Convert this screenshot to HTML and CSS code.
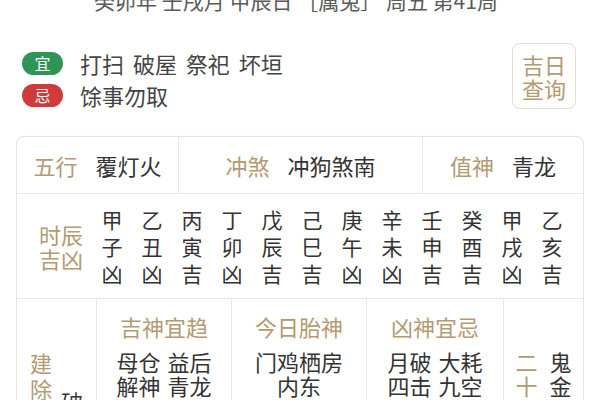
FILE: index.html
```html
<!DOCTYPE html>
<html lang="zh-CN">
<head>
<meta charset="utf-8">
<link rel="stylesheet" href="styles.css">
</head>
<body>
<div class="date">癸卯年 壬戌月 甲辰日 ［属兔］ 周五 第41周</div>

<div class="yiji">
  <div class="yiji-list">
    <div class="yiji-row"><span class="badge badge-yi">宜</span><span class="yiji-text">打扫 破屋 祭祀 坏垣</span></div>
    <div class="yiji-row"><span class="badge badge-ji">忌</span><span class="yiji-text">馀事勿取</span></div>
  </div>
  <div class="jiri-btn">吉日<br>查询</div>
</div>

<div class="table">
  <div class="row1">
    <div class="cell1"><span class="label">五行</span><span class="value">覆灯火</span></div>
    <div class="cell1 bl"><span class="label">冲煞</span><span class="value">冲狗煞南</span></div>
    <div class="cell1 bl"><span class="label">值神</span><span class="value">青龙</span></div>
  </div>
  <div class="row2">
    <div class="hour-label">时辰<br>吉凶</div>
    <div class="hours">
      <div class="hour">甲<br>子<br>凶</div>
      <div class="hour">乙<br>丑<br>凶</div>
      <div class="hour">丙<br>寅<br>吉</div>
      <div class="hour">丁<br>卯<br>凶</div>
      <div class="hour">戊<br>辰<br>吉</div>
      <div class="hour">己<br>巳<br>吉</div>
      <div class="hour">庚<br>午<br>凶</div>
      <div class="hour">辛<br>未<br>凶</div>
      <div class="hour">壬<br>申<br>吉</div>
      <div class="hour">癸<br>酉<br>吉</div>
      <div class="hour">甲<br>戌<br>凶</div>
      <div class="hour">乙<br>亥<br>吉</div>
    </div>
  </div>
  <div class="row3">
    <div class="vcell vcell-center">
      <div class="vlabel">建<br>除<br>十<br>二<br>神</div>
      <div class="vvalue">破<br>日</div>
    </div>
    <div class="col bl">
      <div class="col-head">吉神宜趋</div>
      <div class="col-body">母仓 益后<br>解神 青龙</div>
    </div>
    <div class="col bl">
      <div class="col-head">今日胎神</div>
      <div class="col-body">门鸡栖房<br>内东</div>
    </div>
    <div class="col bl">
      <div class="col-head">凶神宜忌</div>
      <div class="col-body">月破 大耗<br>四击 九空</div>
    </div>
    <div class="vcell vcell-top bl">
      <div class="vlabel">二<br>十<br>八<br>宿</div>
      <div class="vvalue">鬼<br>金<br>羊</div>
    </div>
  </div>
</div>
</body>
</html>
```

FILE: styles.css
```css
html, body {
  margin: 0;
  padding: 0;
  background: #ffffff;
}
body {
  width: 600px;
  height: 400px;
  overflow: hidden;
  font-family: "Noto Sans CJK SC", "Noto Sans", sans-serif;
  color: #333333;
}
.date {
  margin-top: -11px;
  height: 22px;
  line-height: 22px;
  font-size: 21px;
  color: #5a5a5a;
  text-align: center;
  padding-right: 8px;
  white-space: nowrap;
}
.yiji {
  display: flex;
  justify-content: space-between;
  align-items: flex-start;
  margin-top: 32px;
  padding: 0 24px 0 22px;
}
.yiji-list {
  margin-top: 4px;
  display: flex;
  flex-direction: column;
}
.yiji-row {
  height: 32px;
  display: flex;
  align-items: center;
  gap: 17px;
}
.badge {
  width: 41px;
  height: 23px;
  border-radius: 12px;
  color: #ffffff;
  font-size: 16px;
  line-height: 23px;
  text-align: center;
}
.badge-yi { background: #2f9455; }
.badge-ji { background: #cf3a3a; }
.yiji-text {
  font-size: 22px;
  line-height: 32px;
  color: #444444;
  word-spacing: 4px;
}
.jiri-btn {
  width: 62px;
  height: 64px;
  border: 1.5px solid #e3dccf;
  border-radius: 8px;
  color: #b59970;
  font-size: 22px;
  line-height: 24px;
  display: flex;
  align-items: center;
  justify-content: center;
  text-align: center;
}
.table {
  margin: 25px 16px 0 16px;
  border: 1px solid #e8e3db;
  border-radius: 8px;
  box-shadow: 0 0 2px rgba(0,0,0,0.04);
}
.bl { border-left: 1px solid #ebe7e0; }
.row1 {
  display: grid;
  grid-template-columns: 161px 244px 1fr;
  height: 56px;
  border-bottom: 1px solid #ebe7e0;
}
.cell1 {
  display: flex;
  align-items: center;
  justify-content: center;
  gap: 18px;
  font-size: 22px;
}
.label { color: #b59970; }
.value { color: #333333; }
.row2 {
  display: flex;
  align-items: center;
  height: 104px;
  padding-left: 22px;
  border-bottom: 1px solid #ebe7e0;
}
.hour-label {
  width: 44px;
  font-size: 22px;
  line-height: 24px;
  color: #b59970;
}
.hours {
  display: grid;
  grid-template-columns: repeat(12, 40px);
  margin-left: 9px;
}
.hour {
  font-size: 21px;
  line-height: 27px;
  text-align: center;
  color: #333333;
}
.row3 {
  display: grid;
  grid-template-columns: 79px 135px 135px 137px 1fr;
}
.vcell {
  display: flex;
  justify-content: center;
  gap: 9px;
  font-size: 22px;
  line-height: 26px;
}
.vcell-center {
  align-items: center;
  padding: 50px 0;
}
.vcell-top {
  align-items: flex-start;
  padding-top: 50px;
  gap: 12px;
  line-height: 24px;
}
.vlabel { color: #b59970; }
.vvalue { color: #333333; }
.col {
  text-align: center;
  padding-top: 14px;
}
.col-head {
  font-size: 22px;
  line-height: 26px;
  color: #b59970;
}
.col-body {
  margin-top: 10px;
  font-size: 22px;
  line-height: 24px;
  color: #333333;
  word-spacing: 2px;
}
```
